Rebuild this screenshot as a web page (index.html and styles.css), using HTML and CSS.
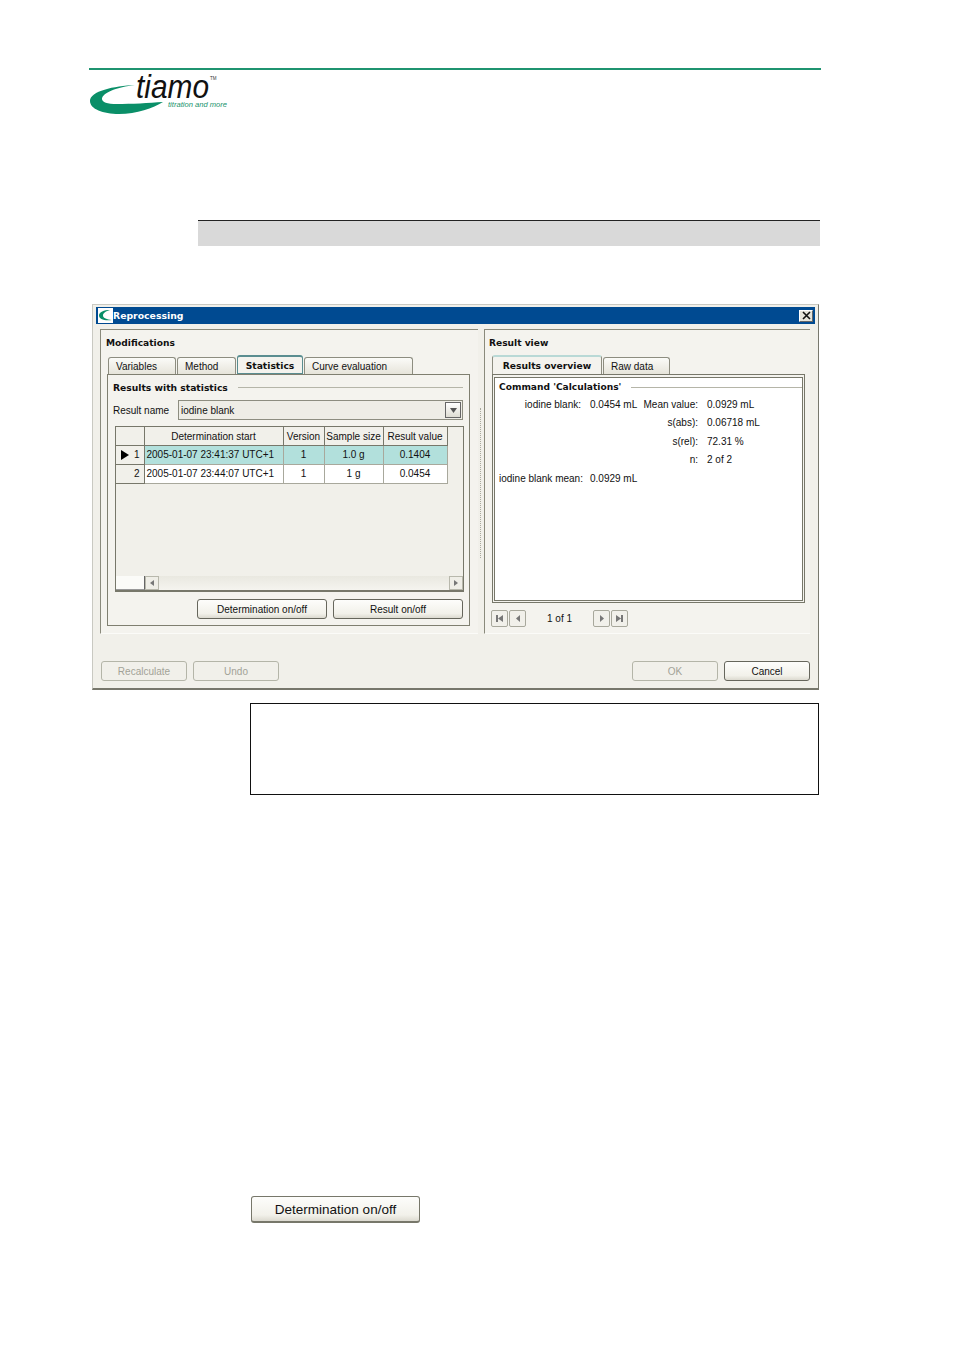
FILE: index.html
```html
<!DOCTYPE html>
<html lang="en">
<head>
<meta charset="utf-8">
<title>tiamo Reprocessing</title>
<link rel="stylesheet" href="styles.css">
</head>
<body>
<header class="doc-head">
  <div class="rule"></div>
  <svg class="logo" width="142" height="47" viewBox="0 0 142 47">
    <path fill="#0a8f68" d="M46 15C25 16 1 21 1 31C1 39 14 44 30 44C48 44 64 38 74 32C60 33 42 34 28 34C18 34 13 32 13 29C13 23 28 17 46 15Z"/>
    <text class="logo-name" x="47" y="28" textLength="73" lengthAdjust="spacingAndGlyphs">tiamo</text>
    <text class="logo-tm" x="121" y="10">TM</text>
    <text class="logo-sub" x="79" y="37" textLength="59" lengthAdjust="spacingAndGlyphs">titration and more</text>
  </svg>
</header>
<div class="grey-bar"></div>

<section class="dialog">
  <div class="titlebar">
    <svg class="app-icon" width="15" height="15" viewBox="0 0 15 15">
      <rect width="15" height="15" fill="#fff"/>
      <path fill="#0a8f68" d="M12 2C6 2 1 4 1 7.500C1 11 6 13 14 12C9 11.500 5 10 5 7.500C5 5 8 3 12 2Z"/>
    </svg>
    <span class="title-text">Reprocessing</span>
    <span class="close">
      <svg width="9" height="9" viewBox="0 0 9 9"><path d="M1 1L8 8M8 1L1 8" stroke="#111" stroke-width="1.600"/></svg>
    </span>
  </div>

  <div class="panels">
    <div class="panel panel-left">
      <h2 class="panel-title">Modifications</h2>
      <div class="tabs tabs-left">
        <span class="tab tab-variables">Variables</span>
        <span class="tab tab-method">Method</span>
        <span class="tab tab-active tab-statistics">Statistics</span>
        <span class="tab tab-curve">Curve evaluation</span>
      </div>
      <div class="pane">
        <div class="group-head"><span>Results with statistics</span><i class="group-line"></i></div>
        <div class="result-row">
          <label class="result-label">Result name</label>
          <div class="combo">
            <span class="combo-text">iodine blank</span>
            <span class="combo-btn"><svg width="7" height="5" viewBox="0 0 7 5"><path d="M0 0H7L3.500 5Z" fill="#555"/></svg></span>
          </div>
        </div>
        <div class="grid-box">
          <table class="data-table">
            <colgroup>
              <col class="c-head"><col class="c-start"><col class="c-ver"><col class="c-size"><col class="c-val">
            </colgroup>
            <thead>
              <tr><th></th><th>Determination start</th><th>Version</th><th>Sample size</th><th>Result value</th></tr>
            </thead>
            <tbody>
              <tr class="selected">
                <th class="row-head"><svg class="row-arrow" width="8" height="10" viewBox="0 0 8 10"><path d="M0 0L8 5L0 10Z" fill="#000"/></svg>1</th>
                <td class="left">2005-01-07 23:41:37 UTC+1</td><td>1</td><td>1.0 g</td><td>0.1404</td>
              </tr>
              <tr>
                <th class="row-head">2</th>
                <td class="left">2005-01-07 23:44:07 UTC+1</td><td>1</td><td>1 g</td><td>0.0454</td>
              </tr>
            </tbody>
          </table>
          <div class="grid-space"></div>
          <div class="hscroll">
            <span class="hs-corner"></span>
            <span class="hs-btn"><svg width="4" height="6" viewBox="0 0 4 6"><path d="M4 0V6L0 3Z" fill="#777"/></svg></span>
            <span class="hs-track"></span>
            <span class="hs-btn"><svg width="4" height="6" viewBox="0 0 4 6"><path d="M0 0V6L4 3Z" fill="#777"/></svg></span>
          </div>
        </div>
        <div class="pane-buttons">
          <button class="btn btn-pane">Determination on/off</button>
          <button class="btn btn-pane">Result on/off</button>
        </div>
      </div>
    </div>

    <div class="splitter"><i></i></div>

    <div class="panel panel-right">
      <h2 class="panel-title">Result view</h2>
      <div class="tabs tabs-right">
        <span class="tab tab-active tab-overview">Results overview</span>
        <span class="tab tab-raw">Raw data</span>
      </div>
      <div class="view-outer">
        <div class="view-inner">
          <div class="view-head"><span>Command 'Calculations'</span><i class="group-line"></i></div>
          <div class="result-grid">
            <span class="lab col1">iodine blank:</span><span class="val col2">0.0454 mL</span><span class="lab col3">Mean value:</span><span class="val col4">0.0929 mL</span>
            <span class="lab col3">s(abs):</span><span class="val col4">0.06718 mL</span>
            <span class="lab col3">s(rel):</span><span class="val col4">72.31 %</span>
            <span class="lab col3">n:</span><span class="val col4">2 of 2</span>
            <span class="lab col1">iodine blank mean:</span><span class="val col2">0.0929 mL</span>
          </div>
        </div>
      </div>
      <div class="nav">
        <span class="nav-btn"><svg width="7" height="7" viewBox="0 0 7 7"><path d="M0 0H2V7H0ZM7 0V7L2 3.500Z" fill="#777"/></svg></span>
        <span class="nav-btn nav-prev"><svg width="4" height="7" viewBox="0 0 4 7"><path d="M4 0V7L0 3.500Z" fill="#777"/></svg></span>
        <span class="nav-text">1 of 1</span>
        <span class="nav-btn"><svg width="4" height="7" viewBox="0 0 4 7"><path d="M0 0V7L4 3.500Z" fill="#777"/></svg></span>
        <span class="nav-btn nav-last"><svg width="7" height="7" viewBox="0 0 7 7"><path d="M0 0V7L5 3.500ZM5 0H7V7H5Z" fill="#777"/></svg></span>
      </div>
    </div>
  </div>

  <div class="footer">
    <button class="btn btn-foot btn-off">Recalculate</button>
    <button class="btn btn-foot btn-off">Undo</button>
    <span class="foot-gap"></span>
    <button class="btn btn-foot btn-off">OK</button>
    <button class="btn btn-foot">Cancel</button>
  </div>
</section>

<div class="note-box"></div>
<button class="btn big-button">Determination on/off</button>
</body>
</html>
```
FILE: styles.css
```css
* { box-sizing: border-box; }
html, body { margin: 0; padding: 0; background: #fff; }
body {
  width: 954px;
  height: 1350px;
  overflow: hidden;
  padding-top: 68px;
  font-family: "Liberation Sans", Arial, sans-serif;
  font-size: 10px;
  color: #111;
}
.doc-head { margin-left: 89px; width: 732px; height: 49px; }
.rule { height: 2px; background: #1f9470; }
.logo { display: block; overflow: visible; }
.logo-name { font: italic 34px "Liberation Sans", sans-serif; fill: #111; }
.logo-tm { font: 4.500px "Liberation Sans", sans-serif; fill: #333; }
.logo-sub { font: italic 7px "Liberation Sans", sans-serif; fill: #18936d; }

.grey-bar {
  margin: 103px 0 0 198px;
  width: 622px;
  height: 26px;
  background: #d9d9d9;
  border-top: 1px solid #222;
}

.dialog {
  margin: 58px 0 0 92px;
  width: 727px;
  height: 386px;
  padding: 3px 3px 0 4px;
  background: #f1f0ea;
  border: 1px solid #c9c9c2;
  border-bottom: 2px solid #77776c;
  border-right-color: #77776c;
}
.titlebar {
  height: 17px;
  margin: -1px 0 0 -1px;
  background: #004a91;
  display: flex;
  align-items: center;
  padding: 0 2px;
  color: #fff;
}
.app-icon { display: block; flex: none; }
.title-text {
  font: bold 9.300px "DejaVu Sans", sans-serif;
  flex: 1;
}
.close {
  width: 14px;
  height: 12px;
  background: #e6e4da;
  border: 1px solid #fff;
  border-right-color: #666;
  border-bottom-color: #666;
  display: flex;
  align-items: center;
  justify-content: center;
}
.close svg { display: block; }

.panels { display: flex; margin-top: 5px; margin-left: 3px; height: 305px; }
.panel {
  height: 305px;
  background: #f4f3ee;
  border-top: 1px solid #8a8a7c;
  border-left: 1px solid #8a8a7c;
  border-bottom: 1px solid #fbfbf8;
  padding: 6px 0 0 5px;
  position: relative;
}
.panel-left { width: 378px; }
.panel-right { width: 326px; padding-left: 4px; }
.panel-title {
  margin: 0;
  font: bold 9.100px/14px "DejaVu Sans", sans-serif;
  color: #111;
}
.splitter { width: 6px; height: 305px; display: flex; align-items: center; justify-content: center; }
.splitter i { display: block; width: 0; height: 150px; border-left: 1px dotted #a9a99d; margin-top: 2px; margin-left: -2px; }

.tabs { display: flex; align-items: flex-end; height: 19px; margin-top: 5px; }
.tabs-left { margin-left: 2px; }
.tabs-right { margin-left: 3px; }
.tab {
  height: 17px;
  display: flex;
  align-items: center;
  padding-left: 7px;
  border: 1px solid #8d8d80;
  border-bottom: 0;
  border-radius: 3px 3px 0 0;
  background: linear-gradient(#fbfbf8, #e6e4da);
  margin-right: 1px;
}
.tab-active {
  height: 19px;
  justify-content: center;
  padding-left: 0;
  background: #f4f3ee;
  font: bold 9.200px "DejaVu Sans", sans-serif;
  border-top: 2px solid #b9d9d6;
  position: relative;
}
.tab-variables { width: 68px; }
.tab-method { width: 59px; }
.tab-statistics { width: 66px; border-color: #5a8d90; border-bottom: 1px solid #5a8d90; }
.tab-curve { width: 109px; }
.tab-overview { width: 110px; }
.tab-raw { width: 67px; }

.pane {
  margin-left: 1px;
  width: 363px;
  height: 252px;
  border: 1px solid #7f7f70;
  padding: 5px 6px 0 5px;
}
.group-head {
  display: flex;
  align-items: center;
  height: 14px;
  font: bold 9.200px "DejaVu Sans", sans-serif;
}
.group-line { display: block; flex: 1; height: 1px; background: #b5b5a8; margin-left: 10px; }
.result-row { display: flex; align-items: center; height: 20px; margin-top: 6px; }
.result-label { width: 65px; }
.combo {
  flex: 1;
  height: 20px;
  display: flex;
  align-items: center;
  border: 1px solid #8d8d80;
  background: #eeede6;
  padding: 0 1px 0 2px;
}
.combo-text { flex: 1; }
.combo-btn {
  width: 16px;
  height: 16px;
  background: linear-gradient(#fff, #dedcd2);
  border: 1px solid #666;
  display: flex;
  align-items: center;
  justify-content: center;
}
.combo-btn svg { display: block; }

.grid-box {
  margin: 6px 0 0 2px;
  width: 349px;
  height: 166px;
  border: 1px solid #77776a;
  border-bottom-width: 2px;
  display: flex;
  flex-direction: column;
  background: #f1f0ea;
}
.data-table {
  table-layout: fixed;
  border-collapse: collapse;
  width: 331px;
  flex: none;
}
.c-head { width: 28px; }
.c-start { width: 139px; }
.c-ver { width: 41px; }
.c-size { width: 59px; }
.c-val { width: 64px; }
.data-table th, .data-table td {
  height: 19px;
  padding: 0;
  border: 1px solid #a8a89c;
  font-weight: normal;
  text-align: center;
  white-space: nowrap;
  background: #fff;
}
.data-table thead th {
  height: 18px;
  padding-top: 2px;
  background: #f1f0ea;
  border-color: #77776a;
  border-top: 0;
}
.data-table thead th:first-child { border-left: 0; }
.data-table .row-head {
  background: #f1f0ea;
  border-left: 0;
  border-color: #77776a;
  text-align: right;
  padding-right: 4px;
  position: relative;
}
.row-arrow { position: absolute; left: 5px; top: 4px; }
.data-table .left { text-align: left; padding-left: 2px; }
.selected td { background: #b2e0dc; }
.grid-space { flex: 1; }
.hscroll { display: flex; height: 14px; flex: none; align-items: stretch; }
.hs-corner {
  width: 29px;
  background: #fbfbf8;
  border-right: 1px solid #666;
  border-bottom: 1px solid #999;
}
.hs-btn {
  width: 14px;
  background: #efeee7;
  border: 1px solid #b8b8ac;
  display: flex;
  align-items: center;
  justify-content: center;
}
.hs-btn svg { display: block; }
.hs-track { flex: 1; background: linear-gradient(#e9e8e0, #f5f4ef); }

.pane-buttons { display: flex; justify-content: flex-end; gap: 6px; margin-top: 7px; }
.btn {
  font-family: "Liberation Sans", Arial, sans-serif;
  font-size: 10px;
  color: #111;
  padding: 0;
  background: linear-gradient(#fdfdfb, #f2f1ea 75%, #dcdad0);
  border: 1px solid #66665c;
  border-radius: 3px;
}
.btn-pane { width: 130px; height: 20px; }

.view-outer {
  margin-left: 3px;
  width: 313px;
  height: 229px;
  border: 1px solid #77776a;
  padding: 2px 1px 1px 1px;
}
.view-inner {
  height: 100%;
  background: #fff;
  border: 1px solid #77776a;
  padding: 2px 0 0 4px;
}
.view-head {
  display: flex;
  align-items: center;
  height: 14px;
  font: bold 9.100px "DejaVu Sans", sans-serif;
}
.result-grid {
  display: grid;
  grid-template-columns: 82px 44px 55px 90px;
  column-gap: 9px;
  grid-auto-rows: 18.500px;
  margin-top: 1px;
  align-items: center;
}
.result-grid .lab, .result-grid .val { white-space: nowrap; }
.result-grid .lab { text-align: right; }
.result-grid .col1 { grid-column: 1; }
.result-grid .col2 { grid-column: 2; }
.result-grid .col3 { grid-column: 3; }
.result-grid .col4 { grid-column: 4; }

.nav { display: flex; align-items: center; height: 17px; margin: 7px 0 0 2px; }
.nav-btn {
  width: 17px;
  height: 17px;
  border: 1px solid #a8a89c;
  border-radius: 2px;
  background: #f1f0ea;
  display: flex;
  align-items: center;
  justify-content: center;
}
.nav-btn svg { display: block; }
.nav-prev, .nav-last { margin-left: 1px; }
.nav-text { width: 67px; text-align: center; }

.footer { display: flex; gap: 6px; margin: 27px 0 0 4px; width: 709px; }
.btn-foot { width: 86px; height: 20px; padding-top: 1px; }
.foot-gap { flex: 1; }
.btn-off { color: #a2a297; border-color: #b4b5a8; background: #f1f0ea; }

.note-box {
  margin: 13px 0 0 250px;
  width: 569px;
  height: 92px;
  border: 1px solid #111;
}
.big-button {
  display: block;
  margin: 401px 0 0 251px;
  width: 169px;
  height: 27px;
  font-size: 13.500px;
  border: 1px solid #77776a;
  border-bottom-width: 2px;
}
```
